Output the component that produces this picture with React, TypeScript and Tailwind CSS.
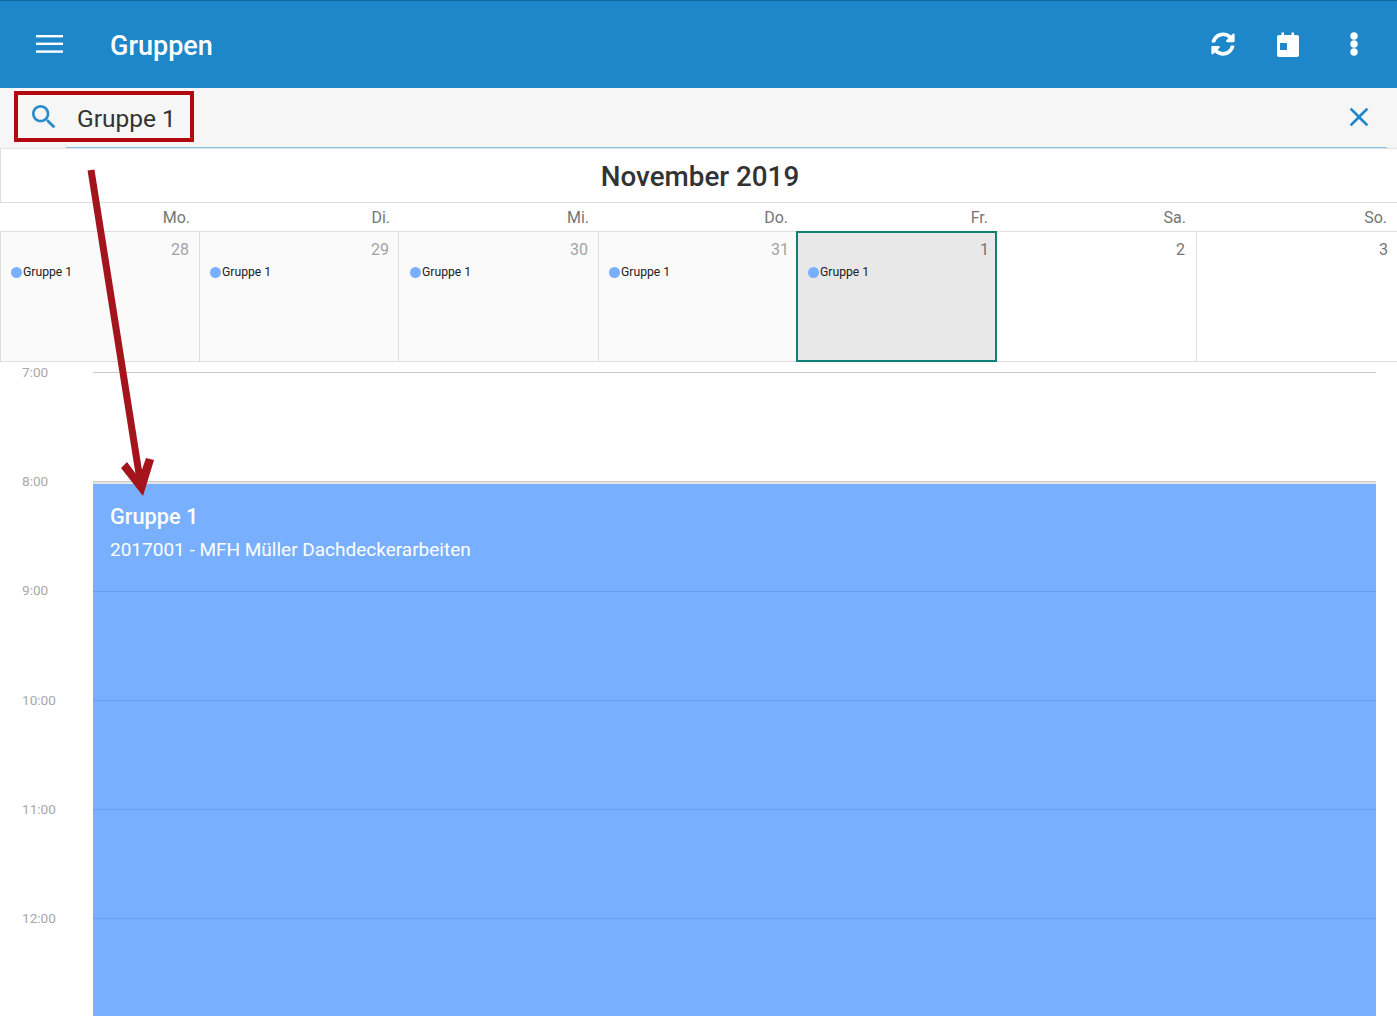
import React from "react";
import { FaSyncAlt } from "react-icons/fa";

const days = [
  { w: "Mo.", d: "28", past: true, ev: true, hp: "pr-[9px]", np: "pr-[10px]", lp: "pl-[10px]" },
  { w: "Di.", d: "29", past: true, ev: true, hp: "pr-[8px]", np: "pr-[9px]", lp: "pl-[10px]" },
  { w: "Mi.", d: "30", past: true, ev: true, hp: "pr-[9px]", np: "pr-[10px]", lp: "pl-[11px]" },
  { w: "Do.", d: "31", past: true, ev: true, hp: "pr-[9px]", np: "pr-[8px]", lp: "pl-[10px]" },
  { w: "Fr.", d: "1", sel: true, ev: true, hp: "pr-[9px]", np: "pr-[6px]", lp: "pl-[10px]" },
  { w: "Sa.", d: "2", hp: "pr-[10px]", np: "pr-[11px]", lp: "pl-[10px]" },
  { w: "So.", d: "3", hp: "pr-[10px]", np: "pr-[9px]", lp: "pl-[10px]" },
];
const hours = ["7:00", "8:00", "9:00", "10:00", "11:00", "12:00"];
const cols = "grid-cols-[199px_199px_200px_199px_200px_199px_201px]";

export default function App() {
  return (
    <div className="relative h-[1016px] w-[1397px] overflow-hidden bg-white font-['Roboto',sans-serif]">
      <header className="flex h-[88px] items-center border-t border-[#17659c] bg-[#1d87c9] pl-[36px] pr-[38px] text-white">
        <svg width="27" height="18" viewBox="0 0 27 18" className="shrink-0 -translate-y-px" fill="white">
          <rect x="0" y="0" width="27" height="2.4" />
          <rect x="0" y="7.6" width="27" height="2.4" />
          <rect x="0" y="15.4" width="27" height="2.4" />
        </svg>
        <div className="ml-[47px] translate-y-[2px] text-[27px] font-medium leading-none">Gruppen</div>
        <div className="ml-auto flex items-center">
          <FaSyncAlt size={24} className="-translate-y-px" />
          <svg width="22" height="25" viewBox="0 0 22 25" fill="white" className="ml-[42px]">
            <path
              fillRule="evenodd"
              d="M4.500 0.500h2.500v2.500h7.500v-2.500h2.500v2.500h3A2 2 0 0 1 22 5v18a2 2 0 0 1-2 2h-18a2 2 0 0 1-2-2V5a2 2 0 0 1 2-2h2.500zM3 11v7h7v-7z"
            />
          </svg>
          <svg width="10" height="24" viewBox="0 0 10 24" fill="white" className="ml-[50px] -translate-y-px">
            <circle cx="5" cy="4" r="3.700" />
            <circle cx="5" cy="12" r="3.700" />
            <circle cx="5" cy="20" r="3.700" />
          </svg>
        </div>
      </header>

      <div className="relative flex h-[61px] items-center border-b border-[#e2e2e2] bg-[#f6f6f6] pl-[28px] pr-[22px]">
        <svg width="32" height="32" viewBox="0 0 24 24" fill="#2b8cc9" className="shrink-0 -translate-y-px">
          <path d="M15.500 14h-.79l-.28-.27C15.410 12.590 16 11.110 16 9.500 16 5.910 13.090 3 9.500 3S3 5.910 3 9.500 5.910 16 9.500 16c1.610 0 3.090-.59 4.230-1.570l.27.28v.79l5 4.990L20.490 19l-4.990-5zm-6 0C7.010 14 5 11.990 5 9.500S7.010 5 9.500 5 14 7.010 14 9.500 11.990 14 9.500 14z" />
        </svg>
        <div className="ml-[17px] translate-y-px text-[24.5px] leading-none text-[#333333]">Gruppe 1</div>
        <svg width="32" height="32" viewBox="0 0 24 24" fill="#1d87c9" className="ml-auto -translate-y-px">
          <path d="M19 6.410L17.590 5 12 10.590 6.410 5 5 6.410 10.590 12 5 17.590 6.410 19 12 13.410 17.590 19 19 17.590 13.410 12z" />
        </svg>
        <div className="absolute bottom-0 left-[66px] right-[10px] h-px bg-[#85c2e8]" />
      </div>

      <div className="flex h-[54px] items-center justify-center border-b border-l border-[#dedede] pl-[2px] pt-[3px] text-[27.8px] font-medium text-[#333333]">
        November 2019
      </div>

      <div className={"grid h-[29px] border-b border-[#dedede] " + cols}>
        {days.map((x) => (
          <div key={x.w} className={"pt-[5px] text-right text-[16px] leading-[19px] text-[#757575] " + x.hp}>
            {x.w}
          </div>
        ))}
      </div>

      <div className={"grid h-[130px] border-b border-[#dedede] " + cols}>
        {days.map((x) => (
          <div
            key={x.d}
            className={
              (x.sel
                ? "-mb-px -ml-px -mt-px border-2 border-[#0e8074] bg-[#e8e8e8] pt-[7px] "
                : x.past
                ? "border-l border-[#dedede] bg-[#fafafa] pt-[8px] "
                : x.d === "2"
                ? "pt-[8px] "
                : "border-l border-[#dedede] pt-[8px] ") +
              x.lp +
              " " +
              x.np
            }
          >
            <div className={x.past ? "text-right text-[16px] leading-[19px] text-[#a3a3a3]" : "text-right text-[16px] leading-[19px] text-[#757575]"}>
              {x.d}
            </div>
            {x.ev && (
              <div className="mt-[6px] flex items-center text-[12.2px] leading-[14px] text-[#222222]">
                <span className="mr-px h-[11px] w-[11px] rounded-full bg-[#78b0ff]" />
                Gruppe 1
              </div>
            )}
          </div>
        ))}
      </div>

      <div className="relative pt-[10px]">
        {hours.map((h) => (
          <div key={h} className="flex h-[109.2px] items-start">
            <div className="w-[93px] shrink-0 -translate-y-[8px] pl-[22px] text-[13.6px] leading-[16px] text-[#a8a8a8]">{h}</div>
            <div className="mr-[21px] h-px flex-1 bg-[#c8c8c8]" />
          </div>
        ))}
        <div className="absolute bottom-0 left-[93px] right-[21px] top-[122px] bg-[#78b0ff] pl-[17px] pt-[20px] text-white">
          <div className="absolute -top-[2px] left-0 right-0 h-[2px] bg-[#e4e4e4]" />
          <div className="text-[21.7px] font-medium leading-[25px]">Gruppe 1</div>
          <div className="mt-[10px] text-[19px] leading-[22px]">2017001 - MFH Müller Dachdeckerarbeiten</div>
          <div className="absolute left-0 right-0 top-[107px] h-px bg-[#649fef]" />
          <div className="absolute left-0 right-0 top-[216px] h-px bg-[#649fef]" />
          <div className="absolute left-0 right-0 top-[325px] h-px bg-[#649fef]" />
          <div className="absolute left-0 right-0 top-[434px] h-px bg-[#649fef]" />
        </div>
      </div>

      <div className="absolute left-[14px] top-[91px] h-[51px] w-[180px] border-4 border-[#b30a12]" />
      <svg className="pointer-events-none absolute left-0 top-0" width="200" height="520" viewBox="0 0 200 520" fill="none">
        <path d="M91 170L140 480" stroke="#a3141d" strokeWidth="7" />
        <path d="M143 496L121 468L127 462L139 478L146 458L154 460Z" fill="#a3141d" />
      </svg>
    </div>
  );
}
